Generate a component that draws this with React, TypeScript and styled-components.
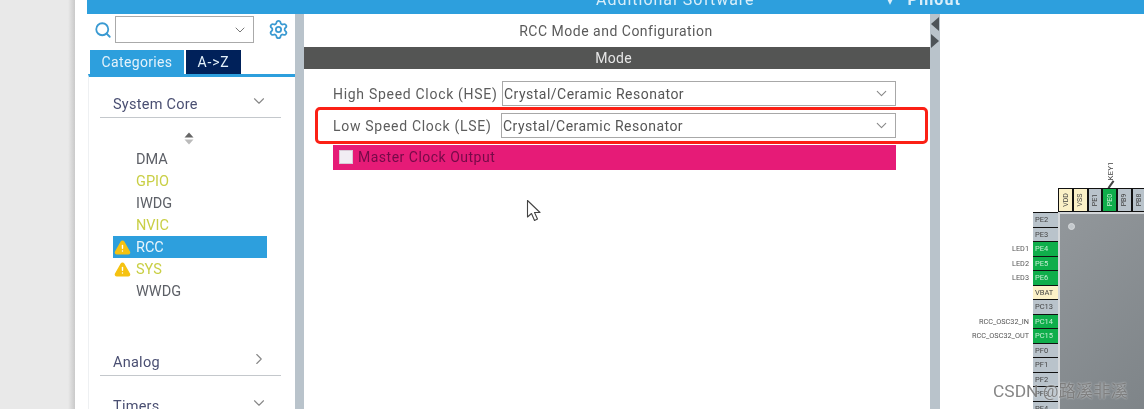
import React from 'react'
import styled, { createGlobalStyle } from 'styled-components'
import { ChevronDown, ChevronRight, Search, Settings, TriangleAlert } from 'lucide-react'

const GlobalStyle = createGlobalStyle`
    html, body {
        margin: 0;
        padding: 0;
        background: #fff;
    }
    * {
        box-sizing: border-box;
    }
`

const categories = [
    { name: 'DMA', tone: 'plain' },
    { name: 'GPIO', tone: 'warn' },
    { name: 'IWDG', tone: 'plain' },
    { name: 'NVIC', tone: 'warn' },
    { name: 'RCC', tone: 'active', alert: true },
    { name: 'SYS', tone: 'warn', alert: true },
    { name: 'WWDG', tone: 'plain' },
]

const topPins = [
    { name: 'VDD', tone: 'power' },
    { name: 'VSS', tone: 'power' },
    { name: 'PE1', tone: 'idle' },
    { name: 'PE0', tone: 'used' },
    { name: 'PB9', tone: 'idle' },
    { name: 'PB8', tone: 'idle' },
]

const leftPins = [
    { name: 'PE2', tone: 'idle' },
    { name: 'PE3', tone: 'idle' },
    { name: 'PE4', tone: 'used', label: 'LED1' },
    { name: 'PE5', tone: 'used', label: 'LED2' },
    { name: 'PE6', tone: 'used', label: 'LED3' },
    { name: 'VBAT', tone: 'power' },
    { name: 'PC13', tone: 'idle' },
    { name: 'PC14', tone: 'used', label: 'RCC_OSC32_IN' },
    { name: 'PC15', tone: 'used', label: 'RCC_OSC32_OUT' },
    { name: 'PF0', tone: 'idle' },
    { name: 'PF1', tone: 'idle' },
    { name: 'PF2', tone: 'idle' },
    { name: 'PF3', tone: 'idle' },
    { name: 'PF4', tone: 'idle' },
]

const App: React.FC = () => {
    return (
        <Page>
            <GlobalStyle />
            <Gutter />
            <Window>
                <TopBar>
                    <TopTitle>Additional Software</TopTitle>
                    <TopArrow>▾</TopArrow>
                    <TopPinout>Pinout</TopPinout>
                </TopBar>
                <Columns>
                    <Sidebar>
                        <SearchRow>
                            <Search size={18} color="#3a9ad2" strokeWidth={2.4} />
                            <SearchBox>
                                <ChevronDown size={16} color="#777" strokeWidth={1.5} />
                            </SearchBox>
                            <Settings size={21} color="#3a9ad2" />
                        </SearchRow>
                        <Tabs>
                            <Tab>Categories</Tab>
                            <Tab $dark>A-&gt;Z</Tab>
                        </Tabs>
                        <Panel>
                            <Group>
                                <span>System Core</span>
                                <ChevronDown size={18} color="#888" strokeWidth={1.5} />
                            </Group>
                            <SortArrows>
                                <svg width="10" height="13" viewBox="0 0 10 13">
                                    <path d="M5 0.5 L9.5 5.5 H0.5 Z" fill="#666" />
                                    <path d="M5 12.5 L9.5 7.5 H0.5 Z" fill="#bbb" />
                                </svg>
                            </SortArrows>
                            <List>
                                {categories.map((c) => (
                                    <Item key={c.name} $tone={c.tone}>
                                        <AlertSlot>
                                            {c.alert && <TriangleAlert size={17} color="#f5c211" fill="#f5c211" stroke="#f5c211" />}
                                        </AlertSlot>
                                        {c.name}
                                    </Item>
                                ))}
                            </List>
                            <Group $top={49}>
                                <span>Analog</span>
                                <ChevronRight size={18} color="#888" strokeWidth={1.5} />
                            </Group>
                            <Group $top={19}>
                                <span>Timers</span>
                                <ChevronDown size={18} color="#888" strokeWidth={1.5} />
                            </Group>
                        </Panel>
                    </Sidebar>
                    <Scrollbar />
                    <Main>
                        <MainTitle>RCC Mode and Configuration</MainTitle>
                        <ModeBar>Mode</ModeBar>
                        <Form>
                            <FieldRow>
                                <FieldLabel>High Speed Clock (HSE)</FieldLabel>
                                <FieldSelect $width={394}>
                                    Crystal/Ceramic Resonator
                                    <ChevronDown size={17} color="#888" strokeWidth={1.5} />
                                </FieldSelect>
                            </FieldRow>
                            <FieldRow>
                                <FieldLabel>Low Speed Clock (LSE)</FieldLabel>
                                <FieldSelect $width={395}>
                                    Crystal/Ceramic Resonator
                                    <ChevronDown size={17} color="#888" strokeWidth={1.5} />
                                </FieldSelect>
                            </FieldRow>
                            <CheckRow>
                                <CheckBox />
                                Master Clock Output
                            </CheckRow>
                        </Form>
                        <Callout />
                        <Cursor width="17" height="24" viewBox="0 0 17 24">
                            <path d="M1.5 1.5 V18 L5.5 14.5 L8.5 21.5 L11.5 20 L8.5 13.5 L14 13.5 Z" fill="#fff" stroke="#444" strokeWidth="1.1" strokeLinejoin="round" />
                        </Cursor>
                    </Main>
                    <Divider>
                        <CollapseLeft />
                        <CollapseRight />
                    </Divider>
                    <Canvas>
                        <Key>KEY1</Key>
                        <KeyStub />
                        <Chip>
                            <ChipCorner />
                            <TopPins>
                                {topPins.map((p) => (
                                    <TopPin key={p.name} $tone={p.tone}>
                                        <span>{p.name}</span>
                                    </TopPin>
                                ))}
                            </TopPins>
                            <LeftPins>
                                {leftPins.map((p) => (
                                    <LeftPinRow key={p.name}>
                                        <PinLabel>{p.label}</PinLabel>
                                        <LeftPin $tone={p.tone}>{p.name}</LeftPin>
                                    </LeftPinRow>
                                ))}
                            </LeftPins>
                            <ChipBody>
                                <ChipDot />
                            </ChipBody>
                        </Chip>
                        <Watermark>CSDN @路溪非溪</Watermark>
                    </Canvas>
                </Columns>
            </Window>
        </Page>
    )
}

const pinColor = (tone: string) => {
    if (tone === 'used') return '#0fae4b'
    if (tone === 'power') return '#fbf1c7'
    return '#b9c3cb'
}

const pinText = (tone: string) => {
    if (tone === 'used') return '#c8efd5'
    return '#444'
}

const itemColor = (tone: string) => {
    if (tone === 'warn') return '#c9cf45'
    if (tone === 'active') return '#e8f5fc'
    return '#5c5f66'
}

const Page = styled.div`
    display: flex;
    width: 1144px;
    height: 409px;
    overflow: hidden;
    background: #fff;
    font-family: Roboto, "Liberation Sans", sans-serif;
    filter: blur(0.35px);
`

const Gutter = styled.div`
    width: 75px;
    flex: none;
    background: linear-gradient(to right, #e9e9e9 0, #e9e9e9 68px, #c9c9c9 75px);
`

const Window = styled.div`
    flex: 1;
    min-width: 0;
    display: flex;
    flex-direction: column;
    padding-left: 12px;
    background: #fff;
`

const TopBar = styled.div`
    height: 14px;
    flex: none;
    display: flex;
    align-items: flex-end;
    overflow: hidden;
    background: #2d9fdd;
    color: #d9eefa;
    font-size: 16px;
    letter-spacing: 0.98px;
`

const TopTitle = styled.div`
    margin-left: 509px;
    margin-bottom: 4px;
    line-height: 20px;
    white-space: nowrap;
`

const TopArrow = styled.div`
    margin-left: 131px;
    margin-bottom: 4px;
    line-height: 20px;
`

const TopPinout = styled.div`
    margin-left: 13px;
    margin-bottom: 4px;
    line-height: 20px;
    font-weight: 700;
    letter-spacing: 1.1px;
`

const Columns = styled.div`
    flex: 1;
    min-height: 0;
    display: flex;
`

const Sidebar = styled.div`
    width: 208px;
    flex: none;
    display: flex;
    flex-direction: column;
    overflow: hidden;
`

const SearchRow = styled.div`
    display: flex;
    align-items: center;
    height: 27px;
    margin-top: 2px;
    padding-left: 7px;

    & > svg:last-child {
        margin-left: 14px;
    }
`

const SearchBox = styled.div`
    width: 139px;
    height: 27px;
    margin-left: 3px;
    padding-right: 5px;
    display: flex;
    align-items: center;
    justify-content: flex-end;
    border: 1.5px solid #aaa;
    background: #fff;
`

const Tabs = styled.div`
    display: flex;
    gap: 2px;
    margin-top: 7px;
    padding-left: 3px;
`

const Tab = styled.div<{ $dark?: boolean }>`
    height: 24px;
    width: ${(p) => (p.$dark ? '55px' : '94px')};
    display: flex;
    align-items: center;
    justify-content: center;
    font-size: 14px;
    letter-spacing: ${(p) => (p.$dark ? '0.8px' : '0.35px')};
    color: #e3f2fb;
    background: ${(p) => (p.$dark ? '#00215a' : '#2d9fdd')};
`

const Panel = styled.div`
    flex: 1;
    margin-left: 1px;
    padding: 0 14px 0 11px;
    border-top: 3px solid #2d9fdd;
    border-left: 1px solid #eef0f2;
`

const Group = styled.div<{ $top?: number }>`
    height: 25px;
    margin-top: ${(p) => p.$top ?? 16}px;
    padding: 0 13px 2px 13px;
    display: flex;
    align-items: center;
    justify-content: space-between;
    border-bottom: 1px solid #c4c8cc;
    font-size: 14.5px;
    letter-spacing: 0.25px;
    color: #4a4f72;

    & > svg {
        margin-top: -6px;
    }
`

const SortArrows = styled.div`
    height: 25px;
    padding: 14px 0 0 84px;
    display: flex;
    line-height: 0;
`

const List = styled.div`
    display: flex;
    flex-direction: column;
    margin-top: 5px;
`

const Item = styled.div<{ $tone: string }>`
    height: 22px;
    width: 154px;
    margin-left: 13px;
    display: flex;
    align-items: center;
    font-size: 14.5px;
    color: ${(p) => itemColor(p.$tone)};
    background: ${(p) => (p.$tone === 'active' ? '#2d9fdd' : 'transparent')};
`

const AlertSlot = styled.div`
    width: 23px;
    flex: none;
    padding-left: 1px;
    display: flex;
    align-items: center;

    & path:nth-child(2), & path:nth-child(3) {
        stroke: #fff;
    }
`

const Scrollbar = styled.div`
    width: 9px;
    flex: none;
    background: #b9c3cb;
`

const Main = styled.div`
    position: relative;
    width: 626px;
    flex: none;
    display: flex;
    flex-direction: column;
`

const MainTitle = styled.div`
    height: 33px;
    display: flex;
    align-items: center;
    justify-content: center;
    padding: 1px 2px 0 0;
    font-size: 14px;
    letter-spacing: 0.5px;
    color: #5a5a5a;
`

const ModeBar = styled.div`
    height: 22px;
    display: flex;
    align-items: center;
    justify-content: center;
    padding-right: 7px;
    font-size: 14px;
    letter-spacing: 0.3px;
    color: #e6e6e6;
    background: #545554;
`

const Form = styled.div`
    width: 563px;
    margin: 12px 0 0 29px;
    display: flex;
    flex-direction: column;
    gap: 7px;
`

const FieldRow = styled.div`
    display: flex;
    align-items: center;
    justify-content: space-between;
    height: 25px;
    font-size: 14px;
    letter-spacing: 0.48px;
    color: #5d5d5d;
`

const FieldLabel = styled.div`
    white-space: nowrap;
    letter-spacing: 0.7px;
`

const FieldSelect = styled.div<{ $width: number }>`
    width: ${(p) => p.$width}px;
    height: 25px;
    padding: 0 5px 0 1px;
    display: flex;
    align-items: center;
    justify-content: space-between;
    border: 1px solid #a8a8a8;
    background: #fff;
    color: #555;
`

const CheckRow = styled.div`
    height: 25px;
    padding: 0 0 2px 6px;
    display: flex;
    align-items: center;
    gap: 5px;
    font-size: 14px;
    letter-spacing: 0.5px;
    color: #750a48;
    background: #e61b77;
`

const CheckBox = styled.div`
    width: 14px;
    height: 14px;
    background: #f1edf3;
    border: 1px solid #d9c9d6;
`

const Callout = styled.div`
    position: absolute;
    left: 11px;
    top: 93px;
    width: 613px;
    height: 37px;
    border: 3.5px solid #fb2015;
    border-radius: 5px;
    pointer-events: none;
`

const Cursor = styled.svg`
    position: absolute;
    left: 222px;
    top: 185px;
`

const Divider = styled.div`
    position: relative;
    width: 10px;
    flex: none;
    background: #b9c3cb;
`

const CollapseLeft = styled.div`
    position: absolute;
    left: 1px;
    top: 3px;
    border-top: 7px solid transparent;
    border-bottom: 7px solid transparent;
    border-right: 8px solid #4d5358;
`

const CollapseRight = styled.div`
    position: absolute;
    left: 1px;
    top: 20px;
    border-top: 7px solid transparent;
    border-bottom: 7px solid transparent;
    border-left: 8px solid #4d5358;
`

const Canvas = styled.div`
    position: relative;
    flex: 1;
    min-width: 0;
    overflow: hidden;
    background: #fff;
`

const Chip = styled.div`
    position: absolute;
    left: 93px;
    top: 174px;
    width: 111px;
    height: 240px;
    display: grid;
    grid-template-columns: 25px 1fr;
    grid-template-rows: 24px 1fr;
    filter: blur(0.4px);
`

const ChipCorner = styled.div``

const TopPins = styled.div`
    display: flex;
    gap: 2px;
    background: #111;
    padding: 0 0 1px 1px;
`

const TopPin = styled.div<{ $tone: string }>`
    flex: 1;
    display: flex;
    align-items: center;
    justify-content: center;
    overflow: hidden;
    background: ${(p) => pinColor(p.$tone)};
    color: ${(p) => pinText(p.$tone)};
    border-top: 1px solid #111;
    font-size: 7px;

    & > span {
        transform: rotate(-90deg);
        white-space: nowrap;
    }
`

const LeftPins = styled.div`
    display: flex;
    flex-direction: column;
    gap: 1px;
    padding-top: 1px;
    background: #111;
`

const LeftPinRow = styled.div`
    position: relative;
    height: 13.5px;
    flex: none;
`

const LeftPin = styled.div<{ $tone: string }>`
    height: 100%;
    padding-left: 2px;
    display: flex;
    align-items: center;
    overflow: hidden;
    background: ${(p) => pinColor(p.$tone)};
    color: ${(p) => pinText(p.$tone)};
    font-size: 7.5px;
`

const PinLabel = styled.div`
    position: absolute;
    right: 29px;
    top: 3px;
    white-space: nowrap;
    font-size: 7.3px;
    line-height: 8px;
    color: #555;
`

const ChipBody = styled.div`
    position: relative;
    background: linear-gradient(135deg, #92979b, #7d8387);
    border-left: 2px solid #d4d7da;
    border-top: 2px solid #d4d7da;
`

const ChipDot = styled.div`
    position: absolute;
    left: 8px;
    top: 9px;
    width: 7px;
    height: 7px;
    border-radius: 50%;
    background: #c3c8cc;
    border: 1px solid #d8dbdd;
`

const Key = styled.div`
    position: absolute;
    left: 162px;
    top: 153px;
    font-size: 8px;
    line-height: 8px;
    color: #444;
    transform: rotate(-90deg);
`

const KeyStub = styled.div`
    position: absolute;
    left: 170px;
    top: 166px;
    width: 2px;
    height: 9px;
    background: #444;
    transform: rotate(35deg);
`

const Watermark = styled.div`
    position: absolute;
    left: 53px;
    top: 363px;
    font-family: Roboto, "Noto Sans CJK SC", sans-serif;
    font-size: 17.4px;
    white-space: nowrap;
    color: rgba(120, 120, 120, 0.9);
    text-shadow: 0 0 2px rgba(255, 255, 255, 0.7);
`

export default App
